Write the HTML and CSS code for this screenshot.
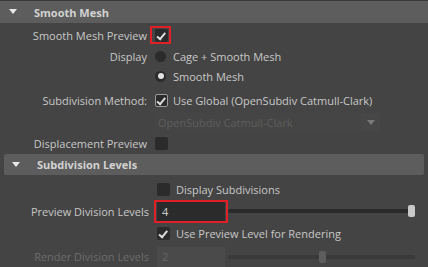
FILE: index.html
```html
<!DOCTYPE html>
<html lang="en">
<head>
  <meta charset="UTF-8">
  <title>Smooth Mesh Attributes</title>
  <link rel="stylesheet" href="styles.css">
</head>
<body>
  <div class="panel">
    <section class="frame">
      <div class="frame-head"><span class="caret"></span>Smooth Mesh</div>
      <div class="frame-body">
        <div class="row first">
          <span class="lbl">Smooth Mesh Preview</span>
          <div class="ctl"><span class="check on marked"></span></div>
        </div>
        <div class="row short">
          <span class="lbl">Display</span>
          <div class="ctl"><span class="radio"></span>Cage + Smooth Mesh</div>
        </div>
        <div class="row short">
          <span class="lbl"></span>
          <div class="ctl"><span class="radio on"></span>Smooth Mesh</div>
        </div>
        <div class="row spaced">
          <span class="lbl">Subdivision Method:</span>
          <div class="ctl"><span class="check on framed"></span>Use Global (OpenSubdiv Catmull-Clark)</div>
        </div>
        <div class="row">
          <span class="lbl"></span>
          <div class="ctl">
            <div class="dropdown disabled">OpenSubdiv Catmull-Clark<span class="drop-btn"><span class="arrow"></span></span></div>
          </div>
        </div>
        <div class="row last">
          <span class="lbl">Displacement Preview</span>
          <div class="ctl"><span class="check"></span></div>
        </div>
      </div>
    </section>

    <section class="frame nested">
      <div class="frame-head"><span class="caret"></span>Subdivision Levels</div>
      <div class="frame-body">
        <div class="row">
          <span class="lbl"></span>
          <div class="ctl"><span class="check"></span>Display Subdivisions</div>
        </div>
        <div class="row">
          <span class="lbl">Preview Division Levels</span>
          <div class="ctl">
            <div class="field marked">4</div>
            <div class="slider"><span class="track"></span><span class="handle" style="left: 180px"></span></div>
          </div>
        </div>
        <div class="row">
          <span class="lbl"></span>
          <div class="ctl"><span class="check on"></span>Use Preview Level for Rendering</div>
        </div>
        <div class="row disabled">
          <span class="lbl">Render Division Levels</span>
          <div class="ctl">
            <div class="field">2</div>
            <div class="slider"><span class="track"></span><span class="handle" style="left: 91px"></span></div>
          </div>
        </div>
      </div>
    </section>
  </div>
</body>
</html>
```

FILE: styles.css
```css
body {
  margin: 0;
  background: #444444;
  font-family: 'Open Sans', 'Noto Sans', sans-serif;
  font-size: 11px;
  color: #c8c8c8;
  overflow: hidden;
}
.panel {
  width: 428px;
  height: 267px;
  overflow: hidden;
}
.frame-head {
  display: flex;
  align-items: center;
  height: 22px;
  background: #5d5d5d;
  border-top: 1px solid #393939;
  padding-left: 9px;
  font-weight: bold;
  color: #d2d2d2;
}
.caret {
  width: 0;
  height: 0;
  border-top: 5px solid #e8e8e8;
  border-left: 4.5px solid transparent;
  border-right: 4.5px solid transparent;
  margin-right: 17px;
  margin-top: -1px;
}
.nested .frame-head {
  margin: 0 4px 3px 4px;
  height: 21px;
  border-top: none;
  border-radius: 2px;
  padding-left: 8px;
}
.row {
  display: grid;
  grid-template-columns: 147px 1fr;
  column-gap: 8px;
  align-items: center;
  height: 22px;
}
.nested .row {
  grid-template-columns: 149px 1fr;
}
.row.first {
  margin-top: 1px;
}
.row.short {
  height: 20px;
}
.row.spaced {
  margin-top: 3px;
}
.row.last {
  height: 21px;
}
.lbl {
  text-align: right;
  white-space: nowrap;
}
.ctl {
  display: flex;
  align-items: center;
  white-space: nowrap;
}
.check {
  position: relative;
  width: 13px;
  height: 13px;
  background: #2b2b2b;
  border-radius: 2px;
  margin-right: 5px;
  box-sizing: border-box;
}
.nested .check {
  margin-right: 6px;
}
.check.on::before {
  content: '';
  position: absolute;
  left: 3px;
  top: 2px;
  width: 3px;
  height: 7px;
  border-right: 2px solid #dedede;
  border-bottom: 2px solid #dedede;
  transform: rotate(40deg);
  transform-origin: 60% 60%;
}
.check.framed {
  border: 1px solid #9c9c9c;
}
.check.framed::before {
  left: 2px;
  top: 1px;
}
.marked::after {
  content: '';
  position: absolute;
  left: -5px;
  top: -3px;
  width: 21px;
  height: 18px;
  border: 2px solid #e01f26;
  box-sizing: border-box;
}
.radio {
  position: relative;
  width: 11px;
  height: 11px;
  border-radius: 50%;
  background: #2b2b2b;
  margin-right: 7px;
}
.radio.on::before {
  content: '';
  position: absolute;
  left: 2.5px;
  top: 2.5px;
  width: 6px;
  height: 6px;
  border-radius: 50%;
  background: #e2e2e2;
}
.dropdown {
  display: flex;
  align-items: center;
  width: 225px;
  height: 18px;
  padding-left: 3px;
  box-sizing: border-box;
  background: #454545;
}
.dropdown.disabled {
  color: #5e5e5e;
}
.drop-btn {
  display: flex;
  align-items: center;
  justify-content: center;
  margin-left: auto;
  width: 19px;
  height: 18px;
  background: #474747;
}
.arrow {
  width: 0;
  height: 0;
  border-top: 5px solid #7a7a7a;
  border-left: 4.5px solid transparent;
  border-right: 4.5px solid transparent;
}
.field {
  position: relative;
  width: 68px;
  height: 19px;
  line-height: 19px;
  padding-left: 5px;
  box-sizing: border-box;
  background: #2b2b2b;
  color: #cfcfcf;
}
.field.marked::after {
  left: -3px;
  top: -2px;
  width: 74px;
  height: 23px;
}
.slider {
  position: relative;
  width: 187px;
  height: 12px;
  margin-left: 3px;
}
.track {
  position: absolute;
  left: 0;
  right: 0;
  top: 4px;
  height: 4px;
  border-radius: 2px;
  background: #2a2a2a;
}
.handle {
  position: absolute;
  top: 0;
  width: 7px;
  height: 12px;
  border-radius: 2px;
  background: #c9c9c9;
}
.row.disabled .lbl {
  color: #6c6c6c;
}
.row.disabled .field {
  background: #4a4a4a;
  color: #666666;
  height: 22px;
  margin-top: 3px;
}
.row.disabled .track {
  background: #3a3a3a;
}
.row.disabled .handle {
  background: #5d5d5d;
}
```
